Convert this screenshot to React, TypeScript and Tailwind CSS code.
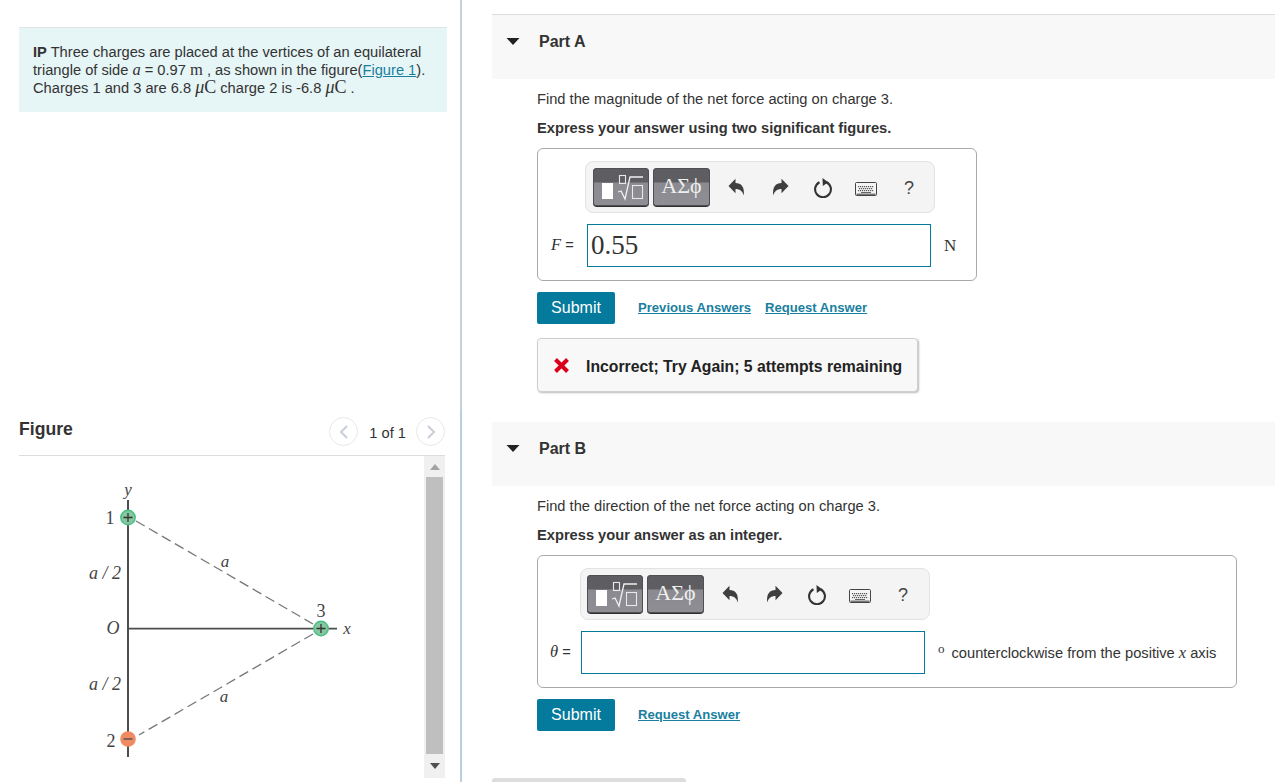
import React from "react";

const sans = "font-['Liberation_Sans',Arial,sans-serif]";
const serif = "font-['Liberation_Serif','Times_New_Roman',serif]";

function UndoIcon({ flip = false }: { flip?: boolean }) {
  return (
    <svg width="17" height="18" viewBox="0 0 17 18" className={flip ? "-scale-x-100" : ""}>
      <path d="M0.5 8 L7.5 0.8 V5 C13 5 16.8 8.5 15.8 17.5 C14.5 13 11.5 11 7.5 11 V15.2 Z" fill="#3f3f3f" />
    </svg>
  );
}

function ReloadIcon() {
  return (
    <svg width="20" height="21" viewBox="0 0 20 21">
      <path d="M6.5 5.2 A7.9 7.9 0 1 0 13.5 5.2" fill="none" stroke="#333" strokeWidth="2.1" />
      <path d="M9.5 1 L15.2 5.2 L9.8 9 Z" fill="#333" />
    </svg>
  );
}

function KeyboardIcon() {
  const rows = [
    { y: 4, xs: [3, 5, 7, 9, 11, 13, 15, 17] },
    { y: 6, xs: [4, 6, 8, 10, 12, 14, 16] },
    { y: 8, xs: [3, 5, 7, 9, 11, 13, 15, 17] },
  ];
  return (
    <svg width="22" height="14" viewBox="0 0 22 14">
      <rect x="0.5" y="0.5" width="21" height="13" rx="1" fill="#f4f4f4" stroke="#444" />
      <rect x="1.5" y="11.5" width="19" height="1.5" fill="#777" />
      {rows.map((r) =>
        r.xs.map((x) => <rect key={`${r.y}-${x}`} x={x} y={r.y} width="1.2" height="1.2" fill="#555" />)
      )}
      <rect x="6" y="10" width="10" height="1" fill="#666" />
    </svg>
  );
}

function RootIcon() {
  return (
    <svg width="56" height="39" viewBox="0 0 56 39" className="block">
      <rect x="9" y="15" width="11" height="16" fill="#fff" />
      <rect x="26.5" y="7.5" width="6" height="8" fill="none" stroke="#e8e8e8" strokeWidth="1.1" />
      <path d="M25 24 L28 23 L32 31 L37 9 H50" fill="none" stroke="#f0f0f0" strokeWidth="1.3" />
      <rect x="39.5" y="17.5" width="10" height="13" fill="none" stroke="#e8e8e8" strokeWidth="1.1" />
    </svg>
  );
}

function Toolbar({ className }: { className: string }) {
  const btn =
    "h-[39px] rounded-[4px] border-b border-[#2f2f2f] bg-[linear-gradient(#5e5e62_0,#5e5e62_36%,#8a8a90_40%,#8e8e94_100%)] shadow-[inset_0_0_0_1px_#505054]";
  return (
    <div className={`flex h-[52px] w-[350px] items-center rounded-lg border border-[#e3e3e3] bg-[#f4f4f4] ${className}`}>
      <div className={`w-[56px] ${btn}`}>
        <RootIcon />
      </div>
      <div className={`ml-[4px] flex w-[57px] items-center justify-center pb-[1px] text-[22px] leading-none text-[#eeeeee] ${serif} ${btn}`}>
        ΑΣϕ
      </div>
      <div className="ml-[18px] flex w-[17px] justify-center">
        <UndoIcon />
      </div>
      <div className="ml-[27px] flex w-[17px] justify-center">
        <UndoIcon flip />
      </div>
      <div className="ml-[24px] flex w-[20px] justify-center">
        <ReloadIcon />
      </div>
      <div className="ml-[22px] mt-[4px] flex w-[22px] justify-center">
        <KeyboardIcon />
      </div>
      <div className={`ml-[27px] mt-[2px] text-[18px] leading-none text-[#444] ${sans}`}>?</div>
    </div>
  );
}

function Caret() {
  return (
    <svg width="14" height="7" viewBox="0 0 14 7" className="shrink-0">
      <path d="M0.5 0 H13.5 L7 7 Z" fill="#222" />
    </svg>
  );
}

function PartHeader({ label, top = false }: { label: string; top?: boolean }) {
  return (
    <div className={`flex items-center bg-[#f8f8f8] pb-[12px] pl-[14px] ${top ? "h-[65px] border-t border-[#dddddd]" : "h-[64px]"}`}>
      <Caret />
      <span className="ml-[19px] mt-[2px] text-[16px] font-bold leading-none text-[#333]">{label}</span>
    </div>
  );
}

function SubmitButton() {
  return (
    <div className="flex h-[32px] w-[78px] items-center justify-center rounded-[2px] bg-[#047a9c] text-[16px] text-white">
      Submit
    </div>
  );
}

function LinkText({ children }: { children: React.ReactNode }) {
  return <span className="relative -top-[1px] text-[13.1px] font-bold leading-none text-[#1a7f9f] underline">{children}</span>;
}

function MathVar({ children }: { children: React.ReactNode }) {
  return <span className={`text-[16.5px] leading-[0] italic ${serif}`}>{children}</span>;
}

function MicroCoulomb() {
  return (
    <span className={`text-[18px] leading-[0] ${serif}`}>
      <i>μ</i>C
    </span>
  );
}

function FigureDrawing() {
  const label = { fontFamily: "'Liberation Serif', serif", fill: "#444" };
  return (
    <svg width="403" height="326" viewBox="19 456 403 326" className="block">
      <line x1="128" y1="500" x2="128" y2="757" stroke="#4d4d4d" strokeWidth="2" />
      <line x1="128" y1="628.7" x2="337" y2="628.7" stroke="#4d4d4d" strokeWidth="1.8" />
      <line x1="136" y1="521" x2="313" y2="624" stroke="#777" strokeWidth="1.3" strokeDasharray="10 5" />
      <line x1="313" y1="634" x2="139" y2="735" stroke="#777" strokeWidth="1.3" strokeDasharray="10 5" />
      <circle cx="128" cy="517.5" r="7.2" fill="#86c6a0" stroke="#46c080" strokeWidth="1.4" />
      <path d="M123.5 517.5 H132.5 M128 513 V522" stroke="#333" strokeWidth="1.3" />
      <circle cx="321" cy="628.5" r="7.2" fill="#86c6a0" stroke="#46c080" strokeWidth="1.4" />
      <path d="M316.5 628.5 H325.5 M321 624 V633" stroke="#333" strokeWidth="1.3" />
      <circle cx="128" cy="739" r="7.8" fill="#f08a62" />
      <path d="M123.5 739 H132.5" stroke="#555" strokeWidth="1.5" />
      <g {...label} fontSize="17">
        <text x="128" y="495" textAnchor="middle" fontStyle="italic">y</text>
        <text x="110" y="524" textAnchor="middle" fontSize="18">1</text>
        <text x="105" y="579" textAnchor="middle" fontStyle="italic" fontSize="18">a / 2</text>
        <text x="113" y="634" textAnchor="middle" fontStyle="italic" fontSize="18">O</text>
        <text x="105" y="690" textAnchor="middle" fontStyle="italic" fontSize="18">a / 2</text>
        <text x="111" y="747" textAnchor="middle" fontSize="18">2</text>
        <text x="225" y="567" textAnchor="middle" fontStyle="italic">a</text>
        <text x="224" y="702" textAnchor="middle" fontStyle="italic">a</text>
        <text x="321" y="617" textAnchor="middle" fontSize="18">3</text>
        <text x="347" y="634" textAnchor="middle" fontStyle="italic">x</text>
      </g>
    </svg>
  );
}

function PagerButton({ dir }: { dir: "l" | "r" }) {
  return (
    <div className="flex h-[29px] w-[29px] items-center justify-center rounded-full border border-[#e8e8e8] bg-white">
      <svg width="10" height="14" viewBox="0 0 10 14">
        <path d={dir === "l" ? "M8 1 L2 7 L8 13" : "M2 1 L8 7 L2 13"} fill="none" stroke="#c9ced6" strokeWidth="2" />
      </svg>
    </div>
  );
}

function Scrollbar() {
  return (
    <div className="flex h-[322px] w-[21px] flex-col items-center bg-[#f0f0f0]">
      <div className="flex h-[21px] items-center justify-center">
        <svg width="10" height="6" viewBox="0 0 10 6"><path d="M5 0 L10 6 H0 Z" fill="#a3a3a3" /></svg>
      </div>
      <div className="h-[277px] w-[17px] bg-[#bfbfbf]" />
      <div className="flex h-[24px] items-center justify-center">
        <svg width="10" height="6" viewBox="0 0 10 6"><path d="M0 0 H10 L5 6 Z" fill="#505050" /></svg>
      </div>
    </div>
  );
}

export default function App() {
  return (
    <div className={`flex h-[782px] w-[1275px] overflow-hidden bg-white text-[#333] ${sans}`}>
      {/* Left column */}
      <div className="flex w-[462px] shrink-0 flex-col">
        <div className="h-[410px] border-r-2 border-[#c9d0d8] pl-[19px] pt-[27px]">
          <div className="h-[85px] w-[428px] border-t border-[#dfe5e6] bg-[#e6f5f6] px-[14px] pt-[15px] text-[14.67px] leading-[18px]">
            <b>IP</b> Three charges are placed at the vertices of an equilateral
            <br />
            triangle of side <MathVar>a</MathVar> = 0.97 <span className={`text-[16.5px] leading-[0] ${serif}`}>m</span> , as shown in the figure(
            <span className="text-[#1a7f9f] underline">Figure 1</span>).
            <br />
            Charges 1 and 3 are 6.8 <MicroCoulomb /> charge 2 is -6.8 <MicroCoulomb /> .
          </div>
        </div>
        <div className="flex-1 border-r-2 border-[#b8cfe2] pl-[19px]">
          <div className="flex h-[46px] w-[426px] items-center justify-between border-b border-[#dddddd] pb-[2px]">
            <span className="pb-[4px] text-[17.6px] font-bold leading-none">Figure</span>
            <div className="flex items-center">
              <PagerButton dir="l" />
              <span className="ml-[11px] mr-[10px] mt-[4px] text-[14.67px] leading-none">1 of 1</span>
              <PagerButton dir="r" />
            </div>
          </div>
          <div className="flex w-[426px]">
            <div className="w-[405px] shrink-0">
              <FigureDrawing />
            </div>
            <Scrollbar />
          </div>
        </div>
      </div>

      {/* Right column */}
      <div className="flex-1 pl-[30px] pt-[14px]">
        <PartHeader label="Part A" top />
        <div className="pl-[45px]">
          <p className="mt-[12px] text-[14.67px] leading-[16px]">Find the magnitude of the net force acting on charge 3.</p>
          <p className="mt-[13px] text-[14.67px] font-bold leading-[16px]">Express your answer using two significant figures.</p>
          <div className="mt-[12px] h-[133px] w-[440px] rounded-md border border-[#aaaaaa] pt-[12px]">
            <Toolbar className="ml-[47px] pl-[7px]" />
            <div className="mt-[11px] flex items-center">
              <span className="ml-[13px] w-[36px] text-[14.67px] leading-none">
                <MathVar>F</MathVar> =
              </span>
              <div className={`flex h-[43px] w-[344px] items-center border border-[#047a9c] pl-[3px] text-[27px] text-[#333] ${serif}`}>
                0.55
              </div>
              <span className={`ml-[13px] text-[17px] leading-none ${serif}`}>N</span>
            </div>
          </div>
          <div className="mt-[11px] flex items-center">
            <SubmitButton />
            <span className="ml-[23px]"><LinkText>Previous Answers</LinkText></span>
            <span className="ml-[14px]"><LinkText>Request Answer</LinkText></span>
          </div>
          <div className="mt-[14px] flex h-[54px] w-[381px] items-center rounded-[4px] border border-[#cfcfcf] bg-[#f8f8f8] pl-[15px] shadow-[1px_1px_2px_#bbbbbb]">
            <svg width="17" height="17" viewBox="0 0 17 17">
              <path d="M2.5 2.5 L14.5 14.5 M14.5 2.5 L2.5 14.5" stroke="#d9001b" strokeWidth="4" />
            </svg>
            <span className="ml-[16px] mt-[3px] text-[15.75px] font-bold leading-none text-[#222]">Incorrect; Try Again; 5 attempts remaining</span>
          </div>
        </div>

        <div className="mt-[30px]">
          <PartHeader label="Part B" />
        </div>
        <div className="pl-[45px]">
          <p className="mt-[12px] text-[14.67px] leading-[16px]">Find the direction of the net force acting on charge 3.</p>
          <p className="mt-[13px] text-[14.67px] font-bold leading-[16px]">Express your answer as an integer.</p>
          <div className="mt-[12px] h-[133px] w-[700px] rounded-md border border-[#aaaaaa] pt-[12px]">
            <Toolbar className="ml-[42px] pl-[6px]" />
            <div className="mt-[11px] flex items-center">
              <span className="ml-[12px] w-[31px] text-[14.67px] leading-none">
                <MathVar>θ</MathVar> =
              </span>
              <div className="h-[43px] w-[344px] border border-[#047a9c]" />
              <span className={`ml-[13px] -mt-[8px] text-[13px] leading-none ${serif}`}>o</span>
              <span className="ml-[7px] mt-[2px] text-[14.67px] leading-none">
                counterclockwise from the positive <MathVar>x</MathVar> axis
              </span>
            </div>
          </div>
          <div className="mt-[11px] flex items-center">
            <SubmitButton />
            <span className="ml-[23px]"><LinkText>Request Answer</LinkText></span>
          </div>
        </div>
        <div className="mt-[47px] h-[8px] w-[194px] rounded-t-[3px] bg-[#dddddd]" />
      </div>
    </div>
  );
}
